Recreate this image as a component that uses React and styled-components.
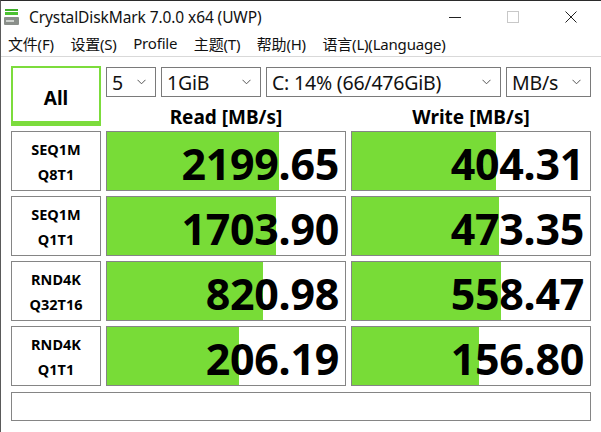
import React from "react";
import styled, {createGlobalStyle} from "styled-components";

const GlobalStyle = createGlobalStyle`
  html, body {
    margin: 0;
    padding: 0;
    background: #ffffff;
  }
  body {
    font-family: "Noto Sans", "Noto Sans CJK SC", sans-serif;
    color: #000;
  }
`

const Window = styled.div`
  width: 601px;
  height: 432px;
  box-sizing: border-box;
  border-top: 1px solid #2b2b2b;
  border-left: 1px solid #5a5a5a;
  background: #fff;
  overflow: hidden;
`

const TitleBar = styled.div`
  height: 32px;
  display: flex;
  align-items: center;
`

const AppIcon = styled.svg`
  margin-left: 3px;
  width: 15px;
  height: 18px;
`

const Title = styled.div`
  margin-left: 10px;
  font-size: 15.5px;
  color: #111;
  flex: 1;
  letter-spacing: -0.1px;
`

const Controls = styled.div`
  display: flex;
  height: 100%;
  padding-right: 1px;
`

const ControlBtn = styled.div`
  width: 58px;
  height: 100%;
  display: flex;
  align-items: center;
  justify-content: center;
`

const MenuBar = styled.div`
  height: 24px;
  box-sizing: border-box;
  padding: 0 0 3px 7px;
  display: flex;
  align-items: center;
  gap: 16.6px;
  border-bottom: 1px solid #d9d9d9;
`

const MenuItem = styled.span`
  font-size: 15px;
  color: #111;
  letter-spacing: -0.2px;
`

const Body = styled.div`
  padding: 9px 0 0 10px;
  display: flex;
  flex-direction: column;
  gap: 5px;
`

const TopArea = styled.div`
  display: flex;
  gap: 5px;
  height: 60px;
`

const AllButton = styled.div`
  width: 90px;
  height: 60px;
  box-sizing: border-box;
  border: 2px solid #7cdc3c;
  border-bottom-width: 5px;
  display: flex;
  align-items: center;
  justify-content: center;
  font-weight: 700;
  font-size: 19px;
  padding-top: 6px;
`

const TopRight = styled.div`
  display: flex;
  flex-direction: column;
`

const ComboRow = styled.div`
  display: flex;
  gap: 5px;
  margin-top: 1px;
`

const Combo = styled.div`
  width: ${({w}) => w}px;
  height: 30px;
  box-sizing: border-box;
  border: 1px solid #7a7a7a;
  display: flex;
  align-items: center;
  justify-content: space-between;
  padding: 0 9px 0 5px;
  font-size: 19.5px;
  color: #111;
  letter-spacing: -0.2px;
`

const Chevron = () => (
    <svg width="9" height="6" viewBox="0 0 9 6">
        <path d="M0.5 0.8 L4.5 4.8 L8.5 0.8" fill="none" stroke="#555" strokeWidth="1"/>
    </svg>
)

const HeaderRow = styled.div`
  display: flex;
  gap: 5px;
  margin-top: 11px;
`

const ColHeader = styled.div`
  width: 240px;
  text-align: center;
  font-weight: 700;
  font-size: 19px;
  line-height: 18px;
`

const Row = styled.div`
  display: flex;
  gap: 5px;
  height: 60px;
`

const LabelCell = styled.div`
  width: 90px;
  box-sizing: border-box;
  border: 1px solid #858585;
  display: flex;
  flex-direction: column;
  align-items: center;
  justify-content: center;
  font-weight: 700;
  font-size: 14.5px;
  line-height: 25px;
  padding-top: 1px;
`

const ValueCell = styled.div`
  width: 240px;
  box-sizing: border-box;
  border: 1px solid #858585;
  position: relative;
  display: flex;
  align-items: center;
  justify-content: flex-end;
  padding: 4px 6px 0 0;
  overflow: hidden;
`

const Bar = styled.div`
  position: absolute;
  left: 0;
  top: 0;
  bottom: 0;
  background: #78dc37;
`

const Value = styled.span`
  position: relative;
  font-weight: 700;
  font-size: 43px;
  letter-spacing: -0.3px;
  line-height: 1;
`

const CommentBox = styled.div`
  width: 580px;
  height: 29px;
  box-sizing: border-box;
  border: 1px solid #858585;
  margin-top: 1px;
`

const rows = [
    {a: "SEQ1M", b: "Q8T1", read: "2199.65", readW: 172, write: "404.31", writeW: 144},
    {a: "SEQ1M", b: "Q1T1", read: "1703.90", readW: 169, write: "473.35", writeW: 147},
    {a: "RND4K", b: "Q32T16", read: "820.98", readW: 156, write: "558.47", writeW: 149},
    {a: "RND4K", b: "Q1T1", read: "206.19", readW: 132, write: "156.80", writeW: 127},
]

const menu = ["文件(F)", "设置(S)", "Profile", "主题(T)", "帮助(H)", "语言(L)(Language)"]

export default function App() {
    return (
        <>
            <GlobalStyle/>
            <Window>
                <TitleBar>
                    <AppIcon viewBox="0 0 15 18">
                        <rect x="1" y="1" width="13" height="2" fill="#3fae2a"/>
                        <rect x="1" y="4" width="13" height="3" fill="#4cc232"/>
                        <rect x="0" y="9" width="15" height="8" rx="1" fill="#8a8f8a"/>
                        <rect x="2" y="12" width="8" height="2" fill="#cfd3cf"/>
                    </AppIcon>
                    <Title>CrystalDiskMark 7.0.0 x64 (UWP)</Title>
                    <Controls>
                        <ControlBtn>
                            <svg width="12" height="12" viewBox="0 0 12 12">
                                <path d="M0 6.5 H12" stroke="#222" strokeWidth="1"/>
                            </svg>
                        </ControlBtn>
                        <ControlBtn>
                            <svg width="12" height="12" viewBox="0 0 12 12">
                                <rect x="0.5" y="0.5" width="11" height="11" fill="none" stroke="#c8c8c8"/>
                            </svg>
                        </ControlBtn>
                        <ControlBtn>
                            <svg width="12" height="12" viewBox="0 0 12 12">
                                <path d="M0.5 0.5 L11.5 11.5 M11.5 0.5 L0.5 11.5" stroke="#222" strokeWidth="1"/>
                            </svg>
                        </ControlBtn>
                    </Controls>
                </TitleBar>
                <MenuBar>
                    {menu.map(m => <MenuItem key={m}>{m}</MenuItem>)}
                </MenuBar>
                <Body>
                    <TopArea>
                        <AllButton>All</AllButton>
                        <TopRight>
                            <ComboRow>
                                <Combo w={50}>5<Chevron/></Combo>
                                <Combo w={100}>1GiB<Chevron/></Combo>
                                <Combo w={235}>C: 14% (66/476GiB)<Chevron/></Combo>
                                <Combo w={85}>MB/s<Chevron/></Combo>
                            </ComboRow>
                            <HeaderRow>
                                <ColHeader>Read [MB/s]</ColHeader>
                                <ColHeader>Write [MB/s]</ColHeader>
                            </HeaderRow>
                        </TopRight>
                    </TopArea>
                    {rows.map((r, i) => (
                        <Row key={i}>
                            <LabelCell>
                                <span>{r.a}</span>
                                <span>{r.b}</span>
                            </LabelCell>
                            <ValueCell>
                                <Bar style={{width: r.readW}}/>
                                <Value>{r.read}</Value>
                            </ValueCell>
                            <ValueCell>
                                <Bar style={{width: r.writeW}}/>
                                <Value>{r.write}</Value>
                            </ValueCell>
                        </Row>
                    ))}
                    <CommentBox/>
                </Body>
            </Window>
        </>
    );
}
